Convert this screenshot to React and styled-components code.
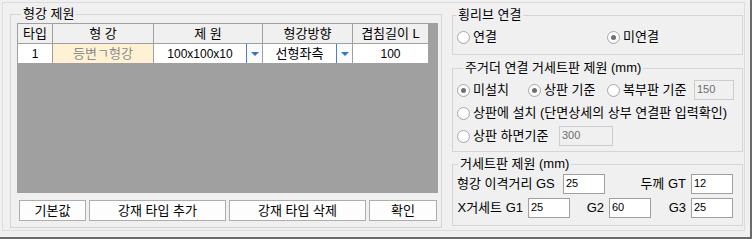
import React from 'react';
import styled, { createGlobalStyle } from 'styled-components';

const GlobalStyle = createGlobalStyle`
  html, body {
    margin: 0;
    padding: 0;
    background: #f0f0f0;
  }
  body {
    font-family: "Liberation Sans", "Noto Sans CJK KR", sans-serif;
    font-size: 13px;
    color: #000;
  }
  * {
    box-sizing: border-box;
  }
`;

const Window = styled.div`
  width: 752px;
  height: 239px;
  background: #f0f0f0;
  border-right: 2px solid #6b6b6b;
  border-bottom: 2px solid #6b6b6b;
  padding: 2px 0 0 2px;
`;

const Frame = styled.div`
  width: 743px;
  height: 229px;
  border: 1px solid #dcdcdc;
  display: flex;
  align-items: flex-start;
  gap: 10px;
  padding-left: 7px;
`;

const Group = styled.div`
  border: 1px solid #d5d5d5;
  margin-top: ${({ $top }) => $top}px;
  width: ${({ $w }) => $w}px;
  height: ${({ $h }) => $h}px;
  display: flex;
  flex-direction: column;
`;

const GroupTitle = styled.div`
  width: fit-content;
  height: 14px;
  line-height: 14px;
  margin: -8px 0 0 ${({ $indent }) => $indent}px;
  padding: 0 2px;
  background: #f0f0f0;
  white-space: nowrap;
`;

const RightCol = styled.div`
  display: flex;
  flex-direction: column;
  width: 291px;
`;

/* grid */
const GridBox = styled.div`
  width: 421px;
  height: 170px;
  margin: 2px 0 0 6px;
  background: #a0a0a0;
  padding: 1px 0 0 1px;
  display: grid;
  grid-template-columns: 35px 101px 109px 90px 76px;
  grid-template-rows: 20px 20px;
  align-content: start;
`;

const HeadCell = styled.div`
  background: #f0f0f0;
  border-right: 1px solid #a0a0a0;
  border-bottom: 1px solid #a0a0a0;
  display: flex;
  align-items: center;
  justify-content: center;
  line-height: 14px;
  white-space: nowrap;
`;

const Cell = styled.div`
  background: ${({ $bg }) => $bg || '#fff'};
  color: ${({ $muted }) => ($muted ? '#8c8c8c' : '#000')};
  font-size: ${({ $num }) => ($num ? '12px' : '13px')};
  border-right: 1px solid #a0a0a0;
  border-bottom: 1px solid #a0a0a0;
  display: flex;
  align-items: center;
  justify-content: center;
  line-height: 14px;
  white-space: nowrap;
`;

const ComboValue = styled.span`
  flex: 1;
  text-align: center;
`;

const ComboButton = styled.span`
  width: 16px;
  align-self: stretch;
  border-left: 1px solid #4683c4;
  background: #fafafa;
  display: flex;
  align-items: center;
  justify-content: center;

  &::after {
    content: '';
    width: 0;
    height: 0;
    border-left: 4px solid transparent;
    border-right: 4px solid transparent;
    border-top: 4px solid #2f78cc;
    margin-top: 1px;
  }
`;

const ButtonRow = styled.div`
  display: flex;
  gap: 3px;
  margin: 7px 0 0 8px;
`;

const Button = styled.button`
  width: ${({ $w }) => $w}px;
  height: 21px;
  padding: 0;
  border: 1px solid #adadad;
  background: #fdfdfd;
  font-family: inherit;
  font-size: 13px;
  line-height: 14px;
  color: #000;
`;

/* radios / inputs */
const Row = styled.div`
  display: flex;
  align-items: center;
  height: ${({ $h }) => $h || 20}px;
  margin-top: ${({ $mt }) => $mt || 0}px;
  padding-left: ${({ $pl }) => ($pl === undefined ? 4 : $pl)}px;
`;

const RadioLabel = styled.label`
  display: flex;
  align-items: center;
  width: ${({ $w }) => ($w ? `${$w}px` : 'auto')};
  white-space: nowrap;
  line-height: 14px;
`;

const RadioCircle = styled.span`
  width: 13px;
  height: 13px;
  border-radius: 50%;
  border: 1px solid #a9a9a9;
  background: radial-gradient(circle at 50% 40%, #ffffff 50%, #ececec 100%);
  display: flex;
  align-items: center;
  justify-content: center;
  margin-right: 3px;
  flex: none;

  &::after {
    content: '';
    display: ${({ $on }) => ($on ? 'block' : 'none')};
    width: 5px;
    height: 5px;
    border-radius: 50%;
    background: #707070;
  }
`;

const TextBox = styled.div`
  width: ${({ $w }) => $w}px;
  height: 20px;
  flex: none;
  border: 1px solid ${({ $disabled }) => ($disabled ? '#cccccc' : '#a0a0a0')};
  background: ${({ $disabled }) => ($disabled ? '#f0f0f0' : '#fff')};
  color: ${({ $disabled }) => ($disabled ? '#6d6d6d' : '#000')};
  padding: 1px 2px;
  line-height: 14px;
  font-size: 11px;
  margin-left: ${({ $ml }) => $ml || 0}px;
`;

const FieldLabel = styled.span`
  width: ${({ $w }) => $w}px;
  flex: none;
  text-align: ${({ $align }) => $align || 'right'};
  padding: ${({ $align }) => ($align === 'left' ? '0 0 0 4px' : '0 5px 0 0')};
  white-space: nowrap;
  line-height: 14px;
`;

const Radio = ({ on, w, children }) => (
  <RadioLabel $w={w}>
    <RadioCircle $on={on} />
    {children}
  </RadioLabel>
);

export default function App() {
  return (
    <>
      <GlobalStyle />
      <Window>
        <Frame>
          <Group $top={11} $w={432} $h={214}>
            <GroupTitle $indent={10}>형강 제원</GroupTitle>
            <GridBox>
              <HeadCell>타입</HeadCell>
              <HeadCell>형 강</HeadCell>
              <HeadCell>제 원</HeadCell>
              <HeadCell>형강방향</HeadCell>
              <HeadCell>겹침길이 L</HeadCell>

              <Cell $num>1</Cell>
              <Cell $bg="#fff2d4" $muted>등변ㄱ형강</Cell>
              <Cell $num>
                <ComboValue>100x100x10</ComboValue>
                <ComboButton />
              </Cell>
              <Cell>
                <ComboValue>선형좌측</ComboValue>
                <ComboButton />
              </Cell>
              <Cell $num>100</Cell>
            </GridBox>
            <ButtonRow>
              <Button $w={67}>기본값</Button>
              <Button $w={137}>강재 타입 추가</Button>
              <Button $w={137}>강재 타입 삭제</Button>
              <Button $w={68}>확인</Button>
            </ButtonRow>
          </Group>

          <RightCol>
            <Group $top={12} $w={291} $h={40}>
              <GroupTitle $indent={3}>횡리브 연결</GroupTitle>
              <Row $h={16} $mt={7}>
                <Radio w={150}>연결</Radio>
                <Radio on>미연결</Radio>
              </Row>
            </Group>

            <Group $top={13} $w={291} $h={84}>
              <GroupTitle $indent={10}>주거더 연결 거세트판 제원 (mm)</GroupTitle>
              <Row $mt={5}>
                <Radio w={71} on>미설치</Radio>
                <Radio w={79} on>상판 기준</Radio>
                <Radio w={87}>복부판 기준</Radio>
                <TextBox $w={40} $disabled>150</TextBox>
              </Row>
              <Row $mt={3}>
                <Radio>상판에 설치 (단면상세의 상부 연결판 입력확인)</Radio>
              </Row>
              <Row $mt={3}>
                <Radio w={102}>상판 하면기준</Radio>
                <TextBox $w={54} $disabled>300</TextBox>
              </Row>
            </Group>

            <Group $top={12} $w={291} $h={62}>
              <GroupTitle $indent={5}>거세트판 제원 (mm)</GroupTitle>
              <Row $mt={3} $pl={0}>
                <FieldLabel $w={110} $align="left">형강 이격거리 GS</FieldLabel>
                <TextBox $w={42}>25</TextBox>
                <FieldLabel $w={86}>두께 GT</FieldLabel>
                <TextBox $w={42}>12</TextBox>
              </Row>
              <Row $mt={4} $pl={0}>
                <FieldLabel $w={75}>X거세트 G1</FieldLabel>
                <TextBox $w={42}>25</TextBox>
                <FieldLabel $w={39}>G2</FieldLabel>
                <TextBox $w={42}>60</TextBox>
                <FieldLabel $w={40}>G3</FieldLabel>
                <TextBox $w={42}>25</TextBox>
              </Row>
            </Group>
          </RightCol>
        </Frame>
      </Window>
    </>
  );
}
